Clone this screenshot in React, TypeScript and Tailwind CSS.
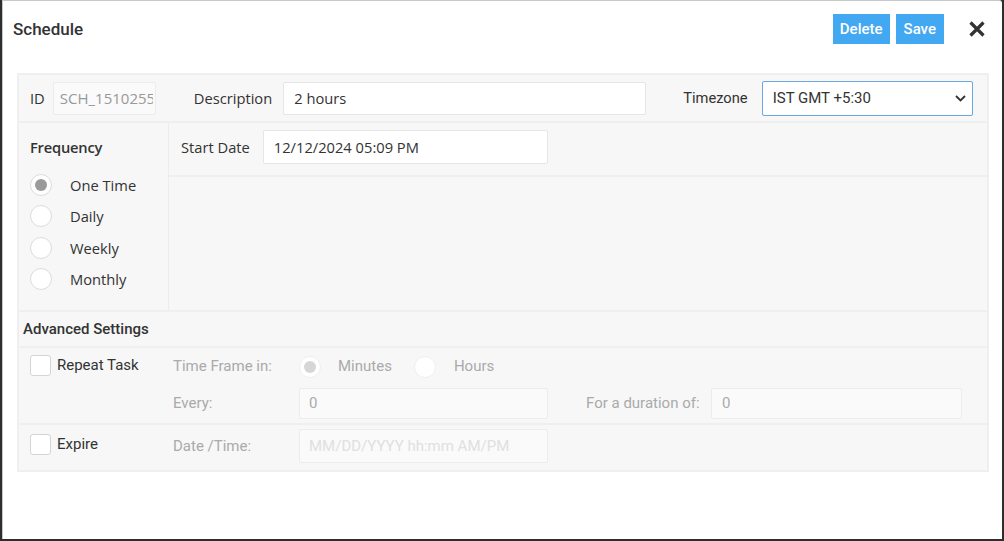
import React from 'react'

const open = { fontFamily: '"Open Sans", "Noto Sans", sans-serif' }
const roboto = { fontFamily: 'Roboto, "Liberation Sans", sans-serif' }

function Radio({ checked, faded }: { checked?: boolean; faded?: boolean }) {
  return (
    <span
      className={`w-[22px] h-[22px] rounded-full bg-white border flex items-center justify-center flex-shrink-0 ${
        faded ? 'border-[#efefef]' : 'border-[#dcdcdc]'
      }`}
    >
      {checked && (
        <span className={`w-[12px] h-[12px] rounded-full ${faded ? 'bg-[#d6d6d6]' : 'bg-[#9a9a9a]'}`} />
      )}
    </span>
  )
}

function Checkbox() {
  return <span className="w-[21px] h-[21px] rounded-[3px] bg-white border border-[#d4d4d4] flex-shrink-0" />
}

const FREQS = ['One Time', 'Daily', 'Weekly', 'Monthly']

export default function App() {
  return (
    <div className="w-[1004px] h-[541px] bg-[#2e2e2e] pl-[2px] pr-[2px] pb-[2px]">
      <div className="w-full h-full bg-white border-t border-l border-[#c8c8c8] rounded-tr-[3px] flex flex-col">

        {/* Header */}
        <div className="h-[72px] flex items-start justify-between pl-[10px] pr-[16px] pt-[13px]" style={roboto}>
          <h1 className="text-[17px] font-medium text-[#333] leading-[30px]">Schedule</h1>
          <div className="flex items-center gap-[6px]">
            <button className="h-[30px] px-[7px] bg-[#42a8f2] text-white text-[15px] font-medium">Delete</button>
            <button className="h-[30px] px-[8px] bg-[#42a8f2] text-white text-[15px] font-medium">Save</button>
            <span className="ml-[18px] text-[#333]">
              <svg width="18" height="18" viewBox="0 0 18 18">
                <path d="M2.5 2.5 L15.5 15.5 M15.5 2.5 L2.5 15.5" stroke="#333" strokeWidth="3.2" strokeLinecap="butt" />
              </svg>
            </span>
          </div>
        </div>

        {/* Panel */}
        <div className="ml-[14px] mr-[13px] border-2 border-[#efefef] bg-[#f7f7f7] text-[14.7px] text-[#333]">

          {/* ID / Description / Timezone */}
          <div className="h-[48px] flex items-center border-b-2 border-[#efefef] pl-[11px]" style={open}>
            <span>ID</span>
            <div className="ml-[8px] w-[103px] h-[33px] bg-[#fafafa] border border-[#ececec] rounded-[2px] pl-[6px] flex items-center text-[#999]">
              <div className="w-[93px] overflow-hidden whitespace-nowrap text-[15px]">SCH_1510255</div>
            </div>
            <span className="ml-[38px]">Description</span>
            <div className="ml-[11px] w-[363px] h-[33px] bg-white border border-[#e6e6e6] rounded-[2px] pl-[10px] flex items-center">
              2 hours
            </div>
            <span className="ml-[37px]" style={roboto}>Timezone</span>
            <div
              className="ml-[14px] w-[211px] h-[35px] bg-white border border-[#6aa6e0] rounded-[2px] pl-[10px] pr-[6px] flex items-center justify-between text-[15px]"
              style={roboto}
            >
              <span>IST GMT +5:30</span>
              <svg width="11" height="7" viewBox="0 0 11 7">
                <path d="M1 1 L5.5 5.5 L10 1" fill="none" stroke="#333" strokeWidth="1.8" />
              </svg>
            </div>
          </div>

          {/* Frequency / Start date */}
          <div className="h-[189px] flex border-b-2 border-[#efefef]" style={open}>
            <div className="w-[150px] border-r border-[#ececec] pl-[11px] pt-[13px]">
              <div className="font-semibold leading-[22px] tracking-[-0.2px]">Frequency</div>
              <div className="mt-[16px] flex flex-col gap-[9.3px]">
                {FREQS.map((f, i) => (
                  <label key={f} className="flex items-center h-[22px]">
                    <Radio checked={i === 0} />
                    <span className="ml-[18px]">{f}</span>
                  </label>
                ))}
              </div>
            </div>
            <div className="flex-1 flex flex-col">
              <div className="h-[54px] flex items-start pt-[7px] border-b-2 border-[#efefef] pl-[12px]">
                <span className="leading-[34px]">Start Date</span>
                <div className="ml-[13px] w-[285px] h-[34px] bg-white border border-[#e6e6e6] rounded-[2px] pl-[10px] flex items-center">
                  12/12/2024 05:09 PM
                </div>
              </div>
            </div>
          </div>

          {/* Advanced settings */}
          <div className="h-[36px] flex items-center border-b-2 border-[#efefef] pl-[4px] font-medium text-[15px]" style={roboto}>
            Advanced Settings
          </div>

          <div className="h-[77px] flex border-b-2 border-[#efefef] text-[15px]" style={roboto}>
            <div className="w-[154px] flex items-start pl-[11px] pt-[7px]">
              <Checkbox />
              <span className="ml-[6px] leading-[21px]">Repeat Task</span>
            </div>
            <div className="flex flex-col text-[#aaa]">
              <div className="h-[37px] flex items-center">
                <span className="w-[126px]">Time Frame in:</span>
                <Radio checked faded />
                <span className="ml-[17px]">Minutes</span>
                <span className="ml-[22px]"><Radio faded /></span>
                <span className="ml-[18px]">Hours</span>
              </div>
              <div className="h-[38px] flex items-center -mt-[1px]">
                <span className="w-[126px]">Every:</span>
                <div className="w-[249px] h-[31px] bg-[#fafafa] border border-[#ececec] rounded-[2px] pl-[9px] flex items-center">0</div>
                <span className="ml-[38px] w-[125px]">For a duration of:</span>
                <div className="w-[251px] h-[31px] bg-[#fafafa] border border-[#ececec] rounded-[2px] pl-[10px] flex items-center">0</div>
              </div>
            </div>
          </div>

          <div className="h-[45px] flex items-start pt-[4px] text-[15px]" style={roboto}>
            <div className="w-[154px] flex items-center pl-[11px] h-[34px] -mt-[2px]">
              <Checkbox />
              <span className="ml-[6px]">Expire</span>
            </div>
            <span className="w-[126px] text-[#aaa] leading-[34px]">Date /Time:</span>
            <div className="w-[249px] h-[34px] bg-[#fafafa] border border-[#ececec] rounded-[2px] pl-[9px] flex items-center text-[#e0e0e0]">
              MM/DD/YYYY hh:mm AM/PM
            </div>
          </div>
        </div>
      </div>
    </div>
  )
}
